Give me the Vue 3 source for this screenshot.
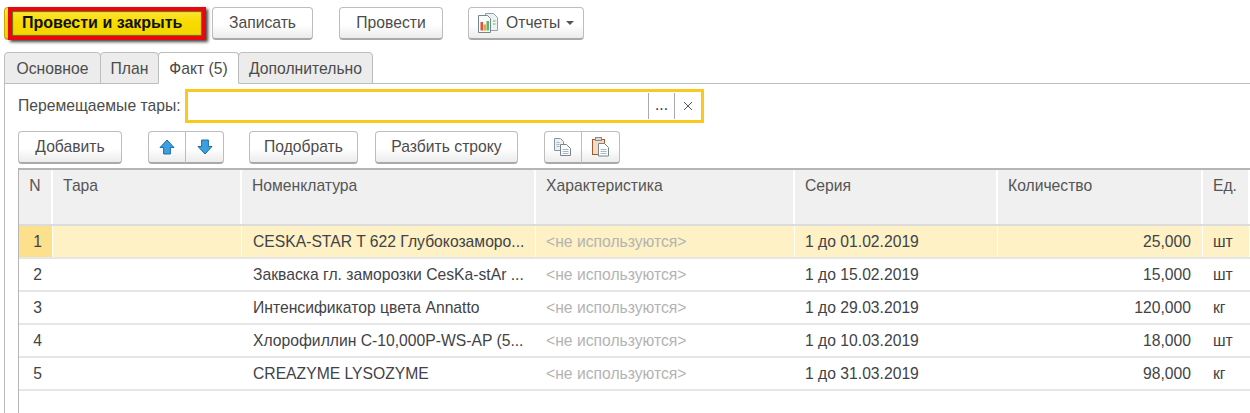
<script setup>
const columns = [
  { key: "n", title: "N", width: 34, cls: "center" },
  { key: "tara", title: "Тара", width: 189 },
  { key: "name", title: "Номенклатура", width: 294 },
  { key: "spec", title: "Характеристика", width: 259 },
  { key: "series", title: "Серия", width: 203 },
  { key: "qty", title: "Количество", width: 205 },
  { key: "unit", title: "Ед.", width: 47 },
];
const rows = [
  { n: 1, name: "CESKA-STAR T 622 Глубокозаморо...", series: "1 до 01.02.2019", qty: "25,000", unit: "шт" },
  { n: 2, name: "Закваска гл. заморозки CesKa-stAr ...", series: "1 до 15.02.2019", qty: "15,000", unit: "шт" },
  { n: 3, name: "Интенсификатор цвета Annatto", series: "1 до 29.03.2019", qty: "120,000", unit: "кг" },
  { n: 4, name: "Хлорофиллин C-10,000P-WS-AP (5...", series: "1 до 10.03.2019", qty: "18,000", unit: "шт" },
  { n: 5, name: "CREAZYME LYSOZYME", series: "1 до 31.03.2019", qty: "98,000", unit: "кг" },
];
const gridCols = columns.map((c) => c.width + "px").join(" ");
</script>

<template>
  <div class="page">
    <div class="toolbar">
      <button class="btn primary">
        Провести и закрыть
        <span class="frame"></span>
      </button>
      <button class="btn save">Записать</button>
      <button class="btn post">Провести</button>
      <button class="btn reports">
        <svg width="22" height="22" viewBox="0 0 22 22">
          <path d="M8.500 1.500h8l4 4v13h-12z" fill="#eef1f3" stroke="#93a1aa" />
          <path d="M1.500 3.500h9l3 3v14h-12z" fill="#fbfbfb" stroke="#76868f" />
          <rect x="3.500" y="10" width="2.500" height="8.500" fill="#e0503c" />
          <rect x="6.500" y="12.500" width="2.500" height="6" fill="#e8a33a" />
          <rect x="9.500" y="9" width="2.500" height="9.500" fill="#5cb85c" />
          <path d="M16 9h2.500M16 12h2.500" stroke="#5cb85c" />
        </svg>
        <span>Отчеты</span>
        <i class="caret"></i>
      </button>
    </div>

    <div class="tabs">
      <div class="tab t1">Основное</div>
      <div class="tab t2">План</div>
      <div class="tab t3 active">Факт (5)</div>
      <div class="tab t4">Дополнительно</div>
    </div>

    <div class="panel">
      <div class="field-row">
        <label>Перемещаемые тары:</label>
        <div class="input">
          <div class="input-btn dots">...</div>
          <div class="input-btn clear">
            <svg width="10" height="10" viewBox="0 0 10 10">
              <path d="M1 1l8 8M9 1l-8 8" stroke="#555" stroke-width="1" fill="none" />
            </svg>
          </div>
        </div>
      </div>

      <div class="actions">
        <button class="btn add">Добавить</button>
        <div class="group arrows">
          <button class="btn seg">
            <svg width="18" height="18" viewBox="0 0 18 18">
              <path d="M9 2l7 7.500h-3.600v6.500H5.600V9.500H2z" fill="#3d9fe0" stroke="#1c6ea8" stroke-width="1" stroke-linejoin="round" />
            </svg>
          </button>
          <button class="btn seg">
            <svg width="18" height="18" viewBox="0 0 18 18">
              <path d="M9 16L2 8.500h3.600V2h6.800v6.500H16z" fill="#3d9fe0" stroke="#1c6ea8" stroke-width="1" stroke-linejoin="round" />
            </svg>
          </button>
        </div>
        <button class="btn pick">Подобрать</button>
        <button class="btn split">Разбить строку</button>
        <div class="group clip">
          <button class="btn seg">
            <svg width="20" height="20" viewBox="0 0 20 20">
              <path d="M1.500 1.500h6l3 3v9h-9z" fill="#eef1f3" stroke="#8796a0" />
              <path d="M3.500 5.500h3M3.500 7.500h3M3.500 9.500h3" stroke="#a9b5bc" />
              <path d="M7.500 7.500h6l4 4v7h-10z" fill="#fff" stroke="#76868f" />
              <path d="M9.500 12.500h6M9.500 14.500h6M9.500 16.500h6" stroke="#a9b5bc" />
            </svg>
          </button>
          <button class="btn seg">
            <svg width="20" height="20" viewBox="0 0 20 20">
              <rect x="1.500" y="2.500" width="12" height="15" fill="#f0dcc8" stroke="#a5582a" />
              <rect x="4.500" y="0.500" width="6" height="3" fill="#d8d8d8" stroke="#8a8a8a" />
              <path d="M7.500 6.500h6l4 4v8.500h-10z" fill="#fff" stroke="#76868f" />
              <path d="M9.500 12.500h6M9.500 14.500h6M9.500 16.500h6" stroke="#a9b5bc" />
            </svg>
          </button>
        </div>
      </div>

      <div class="table">
        <div class="head" :style="{ gridTemplateColumns: gridCols }">
          <div v-for="c in columns" :key="c.key" class="hcell" :class="c.cls">{{ c.title }}</div>
        </div>
        <div
          v-for="(r, i) in rows"
          :key="r.n"
          class="row"
          :class="{ current: i === 0 }"
          :style="{ gridTemplateColumns: gridCols }"
        >
          <div class="cell num">{{ r.n }}</div>
          <div class="cell"></div>
          <div class="cell name">{{ r.name }}</div>
          <div class="cell muted">&lt;не используются&gt;</div>
          <div class="cell">{{ r.series }}</div>
          <div class="cell qty">{{ r.qty }}</div>
          <div class="cell">{{ r.unit }}</div>
        </div>
      </div>
    </div>
  </div>
</template>

<style scoped>
.page {
  width: 1250px;
  height: 413px;
  overflow: hidden;
  background: #fff;
  font-family: "Liberation Sans", Arial, sans-serif;
  font-size: 15.7px;
  color: #4b4b4b;
  box-sizing: border-box;
}
.btn {
  height: 33px;
  box-sizing: border-box;
  padding: 0;
  border: 1px solid #bdbdbd;
  border-bottom: 2px solid #a9a9a9;
  border-radius: 4px;
  background: linear-gradient(#ffffff 55%, #ececec);
  font: 15.7px "Liberation Sans", Arial, sans-serif;
  color: #4b4b4b;
  display: flex;
  align-items: center;
  justify-content: center;
  flex-shrink: 0;
}
.toolbar {
  display: flex;
  align-items: flex-start;
  height: 52px;
  padding: 7px 0 0 4px;
  box-sizing: border-box;
}
.primary {
  position: relative;
  width: 202px;
  justify-content: flex-start;
  padding-left: 17px;
  border-color: #c9a90a;
  background: linear-gradient(#fbe94a, #f8dc00 45%, #f2d300);
  font-size: 16px;
  font-weight: bold;
  color: #111;
}
.frame {
  position: absolute;
  top: -1px;
  left: 3px;
  right: -1px;
  bottom: -2px;
  border: 4px solid #e8070c;
  box-shadow: inset 0 0 1px 1px #6d6410, 2px 2px 3px #444;
}
.save {
  width: 101px;
  margin-left: 6px;
}
.post {
  width: 104px;
  margin-left: 26px;
}
.reports {
  width: 116px;
  margin-left: 25px;
  gap: 7px;
  justify-content: flex-start;
  padding-left: 8px;
}
.caret {
  width: 0;
  height: 0;
  margin-left: -1px;
  border-left: 4px solid transparent;
  border-right: 4px solid transparent;
  border-top: 4px solid #555;
}
.tabs {
  display: flex;
  height: 32px;
  padding-left: 4px;
  box-sizing: border-box;
}
.tab {
  height: 32px;
  box-sizing: border-box;
  border: 1px solid #bdbdbd;
  border-radius: 4px 4px 0 0;
  background: #ececec;
  display: flex;
  align-items: center;
  justify-content: center;
  margin-right: -1px;
  padding-top: 1px;
}
.t1 { width: 97px; }
.t2 { width: 59px; }
.t3 { width: 81px; }
.t4 { width: 135px; }
.tab.active {
  background: #fff;
  border-bottom-color: #fff;
  position: relative;
  z-index: 1;
}
.panel {
  height: 330px;
  margin-left: 4px;
  margin-top: -1px;
  border-top: 1px solid #bdbdbd;
  border-left: 1px solid #bdbdbd;
  box-sizing: border-box;
  padding: 5px 0 0 13px;
}
.field-row {
  display: flex;
  align-items: center;
  height: 34px;
}
label {
  width: 167px;
  flex-shrink: 0;
}
.input {
  width: 519px;
  height: 34px;
  box-sizing: border-box;
  border: 3px solid #fbc81e;
  display: flex;
  justify-content: flex-end;
  align-items: center;
}
.input-btn {
  height: 26px;
  border-left: 1px solid #aaa;
  display: flex;
  align-items: center;
  justify-content: center;
  color: #333;
}
.dots {
  width: 26px;
  padding-bottom: 2px;
  box-sizing: border-box;
  height: 26px;
}
.clear {
  width: 26px;
}
.actions {
  display: flex;
  margin-top: 8px;
  height: 33px;
}
.add { width: 104px; }
.group {
  display: flex;
  margin-left: 26px;
}
.seg {
  width: 38px;
  border-radius: 4px 0 0 4px;
}
.seg + .seg {
  margin-left: -1px;
  border-radius: 0 4px 4px 0;
  width: 39px;
}
.pick {
  width: 109px;
  margin-left: 25px;
}
.split {
  width: 143px;
  margin-left: 17px;
}
.table {
  margin-top: 4px;
  width: 1300px;
  height: 300px;
  border-top: 2px solid #b5b5b5;
  border-left: 1px solid #b5b5b5;
  box-sizing: border-box;
}
.head {
  display: grid;
  height: 54px;
  border-bottom: 2px solid #dcdcdc;
}
.hcell {
  background: #f0f0f0;
  border-right: 2px solid #fff;
  padding: 8px 0 0 10px;
  box-sizing: border-box;
  color: #555;
  line-height: 16px;
  overflow: hidden;
}
.hcell.center {
  padding-left: 0;
  text-align: center;
}
.row {
  display: grid;
  height: 33px;
  box-sizing: border-box;
  border-bottom: 2px solid #e6e6e6;
  color: #3f4347;
}
.cell {
  display: flex;
  align-items: center;
  padding-left: 10px;
  box-sizing: border-box;
  white-space: nowrap;
  overflow: hidden;
}
.cell.name {
  padding-left: 11px;
}
.num {
  padding-left: 3px;
  justify-content: center;
}
.muted {
  color: #b3b3b3;
}
.qty {
  justify-content: flex-end;
  padding-right: 12px;
}
.current .cell {
  background: #fdf1c5;
  box-shadow: inset -1px 0 0 #fff;
}
.current .num {
  background: #fde08c;
}
</style>
